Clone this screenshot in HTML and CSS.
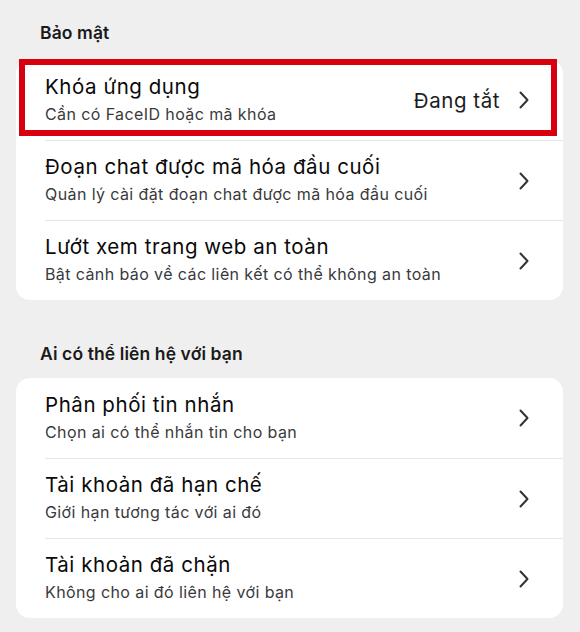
FILE: index.html
```html
<!DOCTYPE html>
<html lang="vi">
<head>
<meta charset="utf-8">
<link rel="stylesheet" href="styles.css">
</head>
<body>
<div class="page">
  <h2 class="section-title">Bảo mật</h2>
  <div class="card">
    <div class="highlight"></div>
    <div class="row">
      <div class="text">
        <div class="title">Khóa ứng dụng</div>
        <div class="sub">Cần có FaceID hoặc mã khóa</div>
      </div>
      <span class="value">Đang tắt</span>
      <svg class="chev" viewBox="0 0 10 18" width="10" height="18"><polyline points="1.5,1.5 8.5,9 1.5,16.5"/></svg>
    </div>
    <div class="row">
      <div class="text">
        <div class="title">Đoạn chat được mã hóa đầu cuối</div>
        <div class="sub">Quản lý cài đặt đoạn chat được mã hóa đầu cuối</div>
      </div>
      <svg class="chev" viewBox="0 0 10 18" width="10" height="18"><polyline points="1.5,1.5 8.5,9 1.5,16.5"/></svg>
    </div>
    <div class="row">
      <div class="text">
        <div class="title">Lướt xem trang web an toàn</div>
        <div class="sub">Bật cảnh báo về các liên kết có thể không an toàn</div>
      </div>
      <svg class="chev" viewBox="0 0 10 18" width="10" height="18"><polyline points="1.5,1.5 8.5,9 1.5,16.5"/></svg>
    </div>
  </div>

  <h2 class="section-title second">Ai có thể liên hệ với bạn</h2>
  <div class="card">
    <div class="row">
      <div class="text">
        <div class="title">Phân phối tin nhắn</div>
        <div class="sub">Chọn ai có thể nhắn tin cho bạn</div>
      </div>
      <svg class="chev" viewBox="0 0 10 18" width="10" height="18"><polyline points="1.5,1.5 8.5,9 1.5,16.5"/></svg>
    </div>
    <div class="row">
      <div class="text">
        <div class="title">Tài khoản đã hạn chế</div>
        <div class="sub">Giới hạn tương tác với ai đó</div>
      </div>
      <svg class="chev" viewBox="0 0 10 18" width="10" height="18"><polyline points="1.5,1.5 8.5,9 1.5,16.5"/></svg>
    </div>
    <div class="row">
      <div class="text">
        <div class="title">Tài khoản đã chặn</div>
        <div class="sub">Không cho ai đó liên hệ với bạn</div>
      </div>
      <svg class="chev" viewBox="0 0 10 18" width="10" height="18"><polyline points="1.5,1.5 8.5,9 1.5,16.5"/></svg>
    </div>
  </div>
</div>
</body>
</html>
```

FILE: styles.css
```css
html, body {
  margin: 0;
  padding: 0;
  background: #efeff0;
}
body {
  font-family: Inter, "Liberation Sans", sans-serif;
  color: #0a0a0a;
  -webkit-font-smoothing: antialiased;
}
.page {
  padding: 21px 17px 0 16px;
}
.section-title {
  margin: 0 0 15px 24px;
  font-size: 17.5px;
  line-height: 24px;
  font-weight: 600;
  letter-spacing: 0.1px;
  color: #1a1a1a;
}
.section-title.second {
  margin-top: 42px;
  margin-bottom: 12px;
}
.card {
  position: relative;
  background: #ffffff;
  border-radius: 14px;
}
.highlight {
  position: absolute;
  left: 3px;
  top: -1px;
  width: 538px;
  height: 77px;
  box-sizing: border-box;
  border: 6px solid #d8000f;
  pointer-events: none;
}
.row {
  display: flex;
  align-items: center;
  height: 80px;
  margin-left: 29px;
  padding-right: 34px;
  box-sizing: border-box;
  border-top: 1px solid #e6e6e8;
}
.row:first-of-type,
.highlight + .row {
  border-top: none;
}
.text {
  flex: 1;
  display: flex;
  flex-direction: column;
  gap: 3px;
  padding-bottom: 2px;
}
.title {
  font-size: 20.5px;
  line-height: 26px;
  letter-spacing: 0.55px;
  color: #0a0a0a;
}
.sub {
  font-size: 16px;
  line-height: 22px;
  letter-spacing: 0.4px;
  color: #3a3a3c;
}
.value {
  font-size: 20.5px;
  letter-spacing: 0.55px;
  color: #1c1c1e;
  margin-right: 19px;
}
.chev {
  flex: none;
  fill: none;
  stroke: #333336;
  stroke-width: 2;
  stroke-linecap: round;
  stroke-linejoin: round;
}
```
